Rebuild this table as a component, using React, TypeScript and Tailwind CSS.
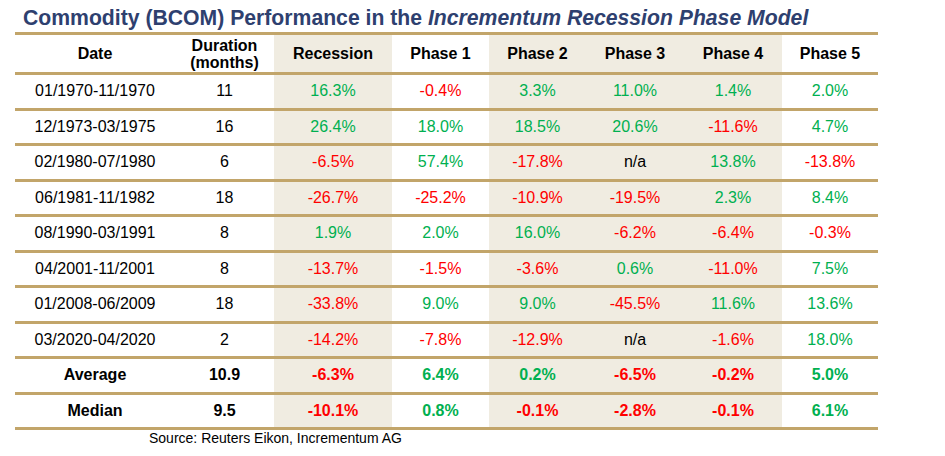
import React from "react";

type Row = { d: string; m: string; v: string[]; bold?: boolean };

const rows: Row[] = [
  { d: "01/1970-11/1970", m: "11", v: ["16.3%", "-0.4%", "3.3%", "11.0%", "1.4%", "2.0%"] },
  { d: "12/1973-03/1975", m: "16", v: ["26.4%", "18.0%", "18.5%", "20.6%", "-11.6%", "4.7%"] },
  { d: "02/1980-07/1980", m: "6", v: ["-6.5%", "57.4%", "-17.8%", "n/a", "13.8%", "-13.8%"] },
  { d: "06/1981-11/1982", m: "18", v: ["-26.7%", "-25.2%", "-10.9%", "-19.5%", "2.3%", "8.4%"] },
  { d: "08/1990-03/1991", m: "8", v: ["1.9%", "2.0%", "16.0%", "-6.2%", "-6.4%", "-0.3%"] },
  { d: "04/2001-11/2001", m: "8", v: ["-13.7%", "-1.5%", "-3.6%", "0.6%", "-11.0%", "7.5%"] },
  { d: "01/2008-06/2009", m: "18", v: ["-33.8%", "9.0%", "9.0%", "-45.5%", "11.6%", "13.6%"] },
  { d: "03/2020-04/2020", m: "2", v: ["-14.2%", "-7.8%", "-12.9%", "n/a", "-1.6%", "18.0%"] },
  { d: "Average", m: "10.9", v: ["-6.3%", "6.4%", "0.2%", "-6.5%", "-0.2%", "5.0%"], bold: true },
  { d: "Median", m: "9.5", v: ["-10.1%", "0.8%", "-0.1%", "-2.8%", "-0.1%", "6.1%"], bold: true },
];

const shaded = [true, false, true, true, true, false];

function color(v: string) {
  if (v === "n/a") return "text-black";
  if (v.startsWith("-")) return "text-[#ff0000]";
  return "text-[#00b050]";
}

const grid =
  "grid grid-cols-[160px_99px_118px_97px_97px_98px_98px_96px] border-b-[3px] border-[#c2a56a]";

export default function App() {
  return (
    <div
      className="w-[945px] h-[456px] bg-white text-black"
      style={{ fontFamily: '"Liberation Sans", Arial, sans-serif' }}
    >
      <div className="h-[32px] pt-[3px] pl-[23px] leading-[29px] text-[21.2px] font-bold text-[#2e406f] whitespace-nowrap">
        Commodity (BCOM) Performance in the <span className="italic">Incrementum Recession Phase Model</span>
      </div>
      <div className="ml-[15px] w-[863px] border-t-[3px] border-[#c2a56a]">
        <div className={grid + " h-[40px] text-[16px] font-bold"}>
          <div className="flex items-center justify-center">Date</div>
          <div className="flex items-center justify-center text-center leading-[17px]">
            Duration
            <br />
            (months)
          </div>
          {["Recession", "Phase 1", "Phase 2", "Phase 3", "Phase 4", "Phase 5"].map((h, i) => (
            <div
              key={h}
              className={
                "flex items-center justify-center " + (shaded[i] ? "bg-[#f0ece1]" : "")
              }
            >
              {h}
            </div>
          ))}
        </div>
        {rows.map((r) => (
          <div
            key={r.d}
            className={grid + " h-[35.5px] text-[16px] " + (r.bold ? "font-bold" : "")}
          >
            <div className="flex items-center justify-center">{r.d}</div>
            <div className="flex items-center justify-center">{r.m}</div>
            {r.v.map((v, i) => (
              <div
                key={i}
                className={
                  "flex items-center justify-center " +
                  color(v) +
                  " " +
                  (shaded[i] ? "bg-[#f0ece1]" : "")
                }
              >
                {v}
              </div>
            ))}
          </div>
        ))}
      </div>
      <div className="pl-[149px] text-[14px] leading-[16px] pt-[0px]">
        Source: Reuters Eikon, Incrementum AG
      </div>
    </div>
  );
}
